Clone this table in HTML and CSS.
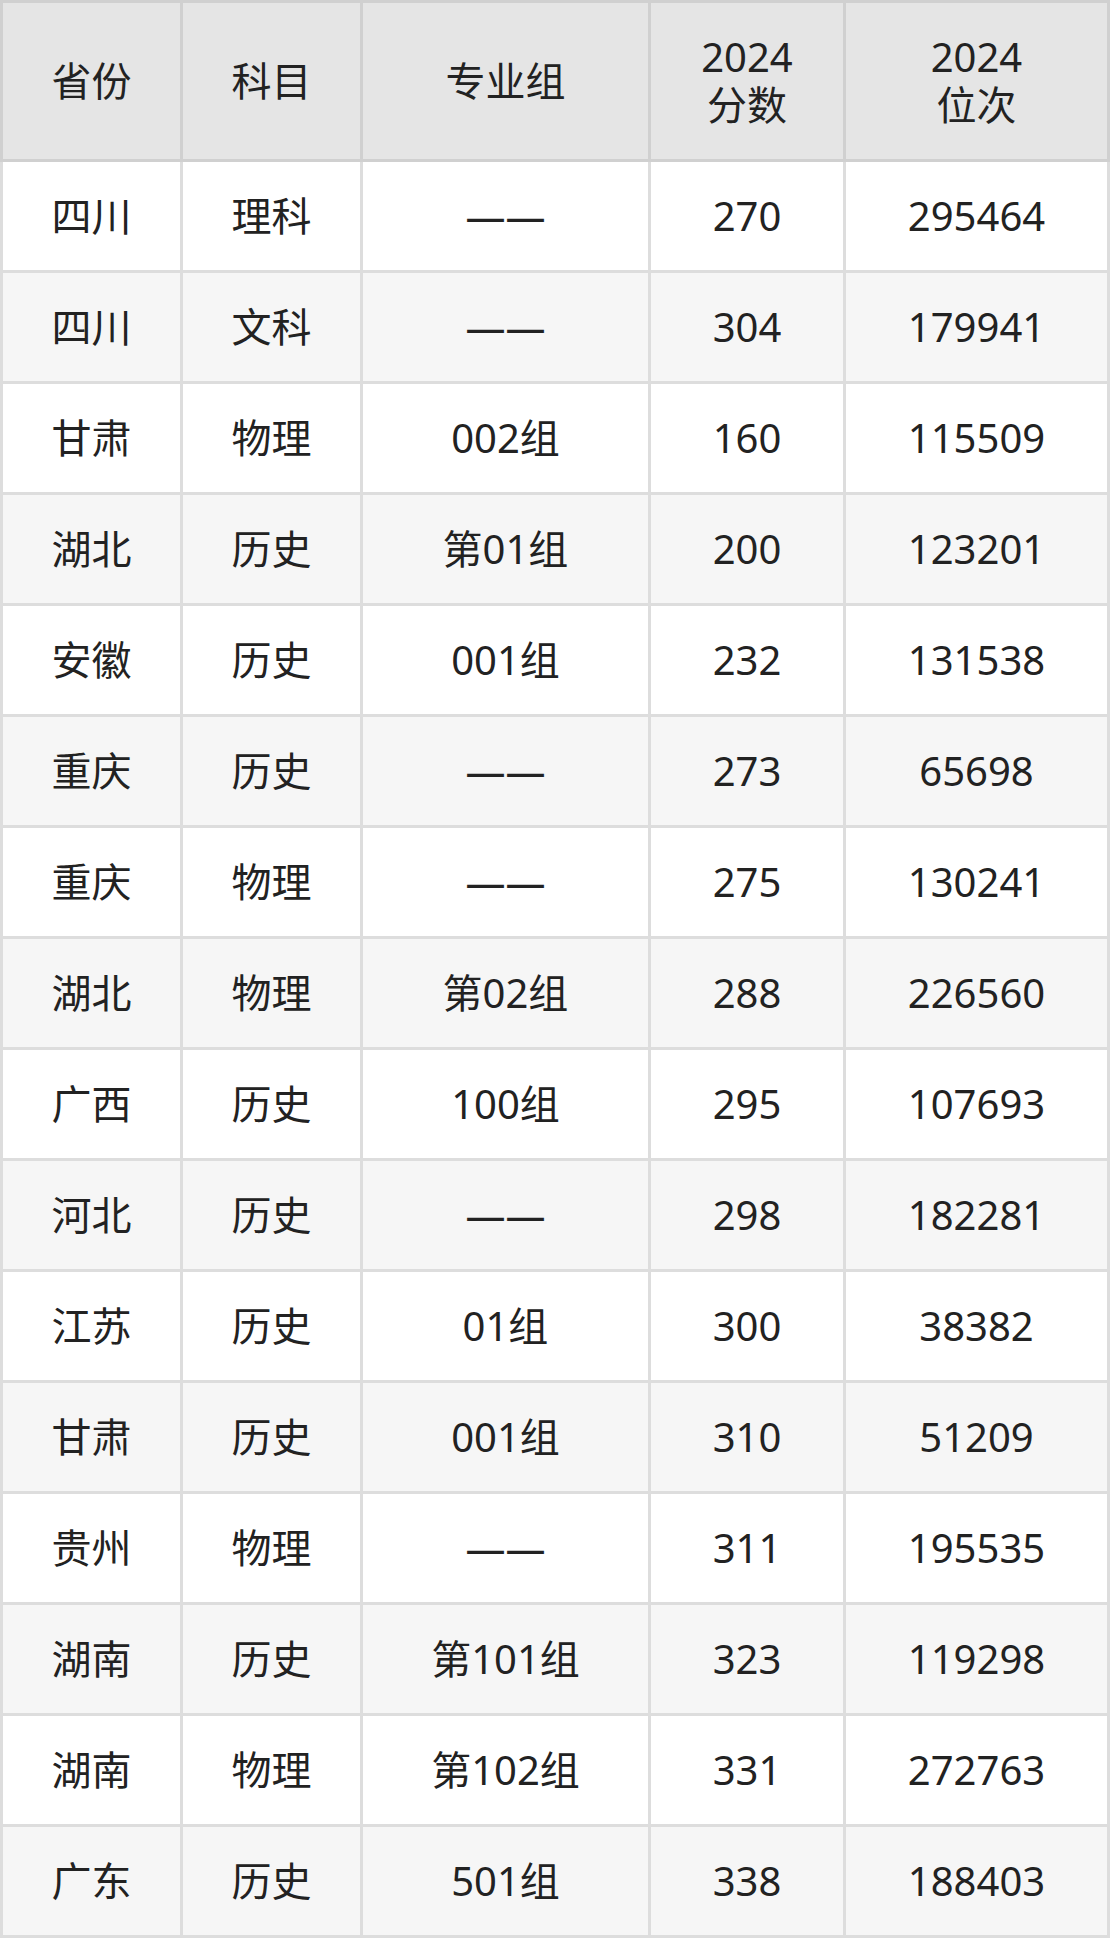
FILE: index.html
```html
<!DOCTYPE html>
<html lang="zh-CN">
<head>
<meta charset="utf-8">
<title>分数位次</title>
<link rel="stylesheet" href="styles.css">
</head>
<body>
<div class="table">
  <div class="row head">
    <div class="cell">省份</div>
    <div class="cell">科目</div>
    <div class="cell">专业组</div>
    <div class="cell">2024<br>分数</div>
    <div class="cell">2024<br>位次</div>
  </div>
  <div class="row"><div class="cell">四川</div><div class="cell">理科</div><div class="cell">——</div><div class="cell">270</div><div class="cell">295464</div></div>
  <div class="row alt"><div class="cell">四川</div><div class="cell">文科</div><div class="cell">——</div><div class="cell">304</div><div class="cell">179941</div></div>
  <div class="row"><div class="cell">甘肃</div><div class="cell">物理</div><div class="cell">002组</div><div class="cell">160</div><div class="cell">115509</div></div>
  <div class="row alt"><div class="cell">湖北</div><div class="cell">历史</div><div class="cell">第01组</div><div class="cell">200</div><div class="cell">123201</div></div>
  <div class="row"><div class="cell">安徽</div><div class="cell">历史</div><div class="cell">001组</div><div class="cell">232</div><div class="cell">131538</div></div>
  <div class="row alt"><div class="cell">重庆</div><div class="cell">历史</div><div class="cell">——</div><div class="cell">273</div><div class="cell">65698</div></div>
  <div class="row"><div class="cell">重庆</div><div class="cell">物理</div><div class="cell">——</div><div class="cell">275</div><div class="cell">130241</div></div>
  <div class="row alt"><div class="cell">湖北</div><div class="cell">物理</div><div class="cell">第02组</div><div class="cell">288</div><div class="cell">226560</div></div>
  <div class="row"><div class="cell">广西</div><div class="cell">历史</div><div class="cell">100组</div><div class="cell">295</div><div class="cell">107693</div></div>
  <div class="row alt"><div class="cell">河北</div><div class="cell">历史</div><div class="cell">——</div><div class="cell">298</div><div class="cell">182281</div></div>
  <div class="row"><div class="cell">江苏</div><div class="cell">历史</div><div class="cell">01组</div><div class="cell">300</div><div class="cell">38382</div></div>
  <div class="row alt"><div class="cell">甘肃</div><div class="cell">历史</div><div class="cell">001组</div><div class="cell">310</div><div class="cell">51209</div></div>
  <div class="row"><div class="cell">贵州</div><div class="cell">物理</div><div class="cell">——</div><div class="cell">311</div><div class="cell">195535</div></div>
  <div class="row alt"><div class="cell">湖南</div><div class="cell">历史</div><div class="cell">第101组</div><div class="cell">323</div><div class="cell">119298</div></div>
  <div class="row"><div class="cell">湖南</div><div class="cell">物理</div><div class="cell">第102组</div><div class="cell">331</div><div class="cell">272763</div></div>
  <div class="row alt"><div class="cell">广东</div><div class="cell">历史</div><div class="cell">501组</div><div class="cell">338</div><div class="cell">188403</div></div>
</div>
</body>
</html>
```
FILE: styles.css
```css
html, body {
  margin: 0;
  padding: 0;
  background: #ffffff;
}
.table {
  width: 1110px;
  font-family: "Noto Sans", "Noto Sans CJK SC", sans-serif;
  font-size: 40px;
  color: #222222;
}
.row {
  display: grid;
  grid-template-columns: 183px 180px 288px 195px 264px;
  height: 111px;
  background: #ffffff;
}
.row.alt {
  background: #f6f6f6;
}
.cell {
  box-sizing: border-box;
  display: flex;
  align-items: center;
  justify-content: center;
  text-align: center;
  line-height: 46px;
  border-right: 3px solid #dddddd;
  border-bottom: 3px solid #dddddd;
}
.cell:first-child {
  border-left: 3px solid #dddddd;
}
.row.head {
  height: 162px;
  background: #e5e5e5;
}
.row.head .cell {
  line-height: 48px;
  border-color: #d0d0d0;
  border-top: 3px solid #d0d0d0;
}
```
